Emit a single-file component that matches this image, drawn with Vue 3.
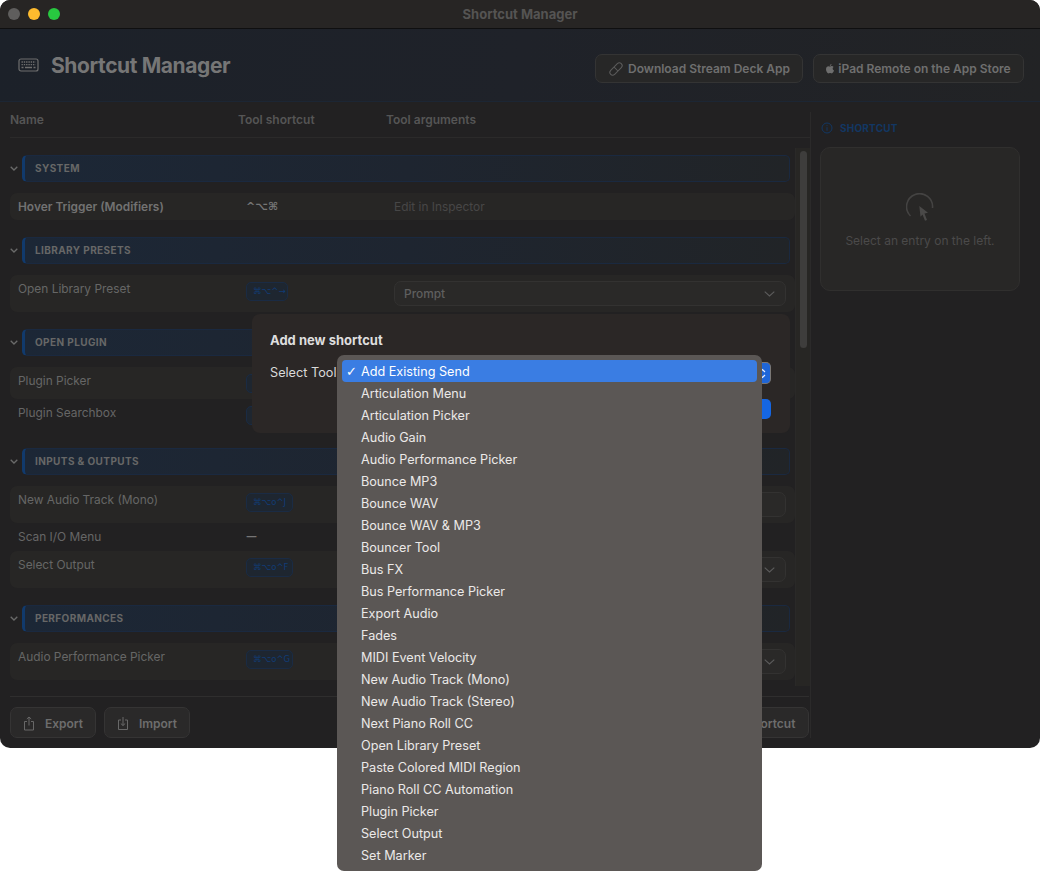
<template>
  <div class="page">
    <div class="window">
      <div class="titlebar">
        <div class="lights">
          <span class="light grey"></span>
          <span class="light yellow"></span>
          <span class="light green"></span>
        </div>
        <span class="window-title">Shortcut Manager</span>
      </div>

      <header class="head">
        <svg class="kbd-icon" width="21" height="14" viewBox="0 0 21 14" fill="none" stroke="#6e6e6e">
          <rect x="1" y="1" width="19" height="12" rx="2" stroke-width="1.2" />
          <path d="M3.5 4h14M3.5 6.6h14" stroke-width="1.3" stroke-dasharray="1.4 .9" />
          <path d="M3.5 9.5h2M7 9.5h7M15.5 9.500h2" stroke-width="1.3" />
        </svg>
        <h1>Shortcut Manager</h1>
        <div class="head-actions">
          <button class="head-btn dl">
            <svg width="16" height="16" viewBox="0 0 16 16" fill="none" stroke="#5c5c5c" stroke-width="1">
              <g transform="rotate(-45 8 8)">
                <rect x="0.500" y="5.200" width="15" height="5.600" rx="2.800" />
                <path d="M8 5.200v5.600" />
              </g>
            </svg>
            Download Stream Deck App
          </button>
          <button class="head-btn ipad">
            <svg width="8" height="10" viewBox="0 0 8 10" fill="#6e6e6e">
              <path d="M5.500 0c.1.8-.6 1.900-1.700 1.900C3.700 1 4.500.1 5.500 0ZM4 2.500c.5 0 1-.4 1.800-.4.700 0 1.400.4 1.800 1-1.400.9-1.200 2.800.4 3.500-.4 1-1.200 2.900-2.200 2.900-.7 0-.9-.4-1.700-.4s-1 .4-1.700.4C1.300 9.500 0 7.300 0 5.300c0-2 1.200-3.100 2.400-3.100.7 0 1.200.3 1.600.3Z" />
            </svg>
            iPad Remote on the App Store
          </button>
        </div>
      </header>

      <div class="body">
        <div class="left">
          <div class="colhead">
            <span>Name</span>
            <span>Tool shortcut</span>
            <span>Tool arguments</span>
          </div>

          <div class="list-wrap">
            <div class="list">
              <section v-for="g in groups" :key="g.name" class="group">
                <div class="group-head">
                  <svg class="chev" width="8" height="5" viewBox="0 0 8 5" fill="none" stroke="#6a6a6a" stroke-width="1.3">
                    <path d="M.7.7 4 4l3.300-3.300" />
                  </svg>
                  <div class="section">{{ g.name }}</div>
                </div>
                <div
                  v-for="r in g.rows"
                  :key="r.name"
                  class="row"
                  :class="{ shaded: r.shaded, tall: r.tall }"
                >
                  <span class="label" :class="{ strong: r.strong }">{{ r.name }}</span>
                  <div class="short-cell">
                    <span v-if="r.badge !== undefined" class="badge" :class="{ narrow: r.narrow }">{{ r.badge }}</span>
                    <span v-else class="plain-key">{{ r.keys }}</span>
                  </div>
                  <div class="arg-cell">
                    <span v-if="r.hint" class="hint">{{ r.hint }}</span>
                    <div v-if="r.field !== undefined" class="field">
                      <span>{{ r.field }}</span>
                      <svg v-if="r.chevron" width="11" height="6" viewBox="0 0 11 6" fill="none" stroke="#5c5c5c" stroke-width="1.100">
                        <path d="M.7.700 5.500 5 10.300.700" />
                      </svg>
                    </div>
                  </div>
                </div>
              </section>
            </div>
            <div class="track"><div class="thumb"></div></div>
          </div>

          <footer class="foot">
            <button class="foot-btn">
              <svg width="12" height="15" viewBox="0 0 12 15" fill="none" stroke="#686868" stroke-width="1">
                <path d="M4 5.500H1.500v8.500h9V5.500H8M6 9.500V1M3.800 3 6 1l2.200 2" />
              </svg>
              Export
            </button>
            <button class="foot-btn">
              <svg width="12" height="15" viewBox="0 0 12 15" fill="none" stroke="#686868" stroke-width="1">
                <path d="M4 4H1.500v9.500h9V4H8M6 1v8.500M3.800 7.500 6 9.500l2.200-2" />
              </svg>
              Import
            </button>
            <button class="foot-btn add">Add new shortcut</button>
          </footer>
        </div>

        <aside class="right">
          <div class="right-label">
            <svg width="12" height="12" viewBox="0 0 12 12" fill="none" stroke="#123763" stroke-width="1">
              <circle cx="6" cy="6" r="5" />
              <path d="M6 5.200v3.600M6 3.200v1" />
            </svg>
            <span>SHORTCUT</span>
          </div>
          <div class="empty-card">
            <svg width="28" height="29" viewBox="0 0 28 29" fill="none">
              <path d="M4.500 23A13 13 0 1 1 26.500 15" stroke="#444342" stroke-width="1.600" />
              <path d="M13.300 13 22 19.700l-3.500.8 2.500 6.500-2 .8-2.500-6.300-2 2.200Z" fill="#4a4948" />
            </svg>
            <p>Select an entry on the left.</p>
          </div>
        </aside>
      </div>
    </div>

    <div class="modal">
      <h2>Add new shortcut</h2>
      <div class="modal-row">
        <span>Select Tool</span>
        <div class="select-stub">
          <svg width="7" height="11" viewBox="0 0 7 11" fill="none" stroke="#e8eefc" stroke-width="1.200">
            <path d="M1 4 3.500 1.500 6 4M1 7l2.500 2.500L6 7" />
          </svg>
        </div>
      </div>
      <div class="modal-actions"><span class="confirm"></span></div>
    </div>

    <div class="menu">
      <div
        v-for="(item, i) in tools"
        :key="item"
        class="menu-item"
        :class="{ active: i === 0 }"
      >
        <span class="tick">{{ i === 0 ? '✓' : '' }}</span>{{ item }}
      </div>
    </div>
  </div>
</template>

<script setup>
const groups = [
  {
    name: 'SYSTEM',
    rows: [
      { name: 'Hover Trigger (Modifiers)', strong: true, shaded: true, keys: '^⌥⌘', hint: 'Edit in Inspector' }
    ]
  },
  {
    name: 'LIBRARY PRESETS',
    rows: [
      { name: 'Open Library Preset', shaded: true, badge: '⌘⌥^→', narrow: true, field: 'Prompt', chevron: true }
    ]
  },
  {
    name: 'OPEN PLUGIN',
    rows: [
      // badges of these two are covered by the modal, only the edge shows
      { name: 'Plugin Picker', shaded: true, badge: '' },
      { name: 'Plugin Searchbox', badge: '' }
    ]
  },
  {
    name: 'INPUTS & OUTPUTS',
    rows: [
      { name: 'New Audio Track (Mono)', shaded: true, badge: '⌘⌥o^J', field: '' },
      { name: 'Scan I/O Menu', tall: true, keys: '—' },
      { name: 'Select Output', shaded: true, badge: '⌘⌥o^F', field: '', chevron: true }
    ]
  },
  {
    name: 'PERFORMANCES',
    rows: [
      { name: 'Audio Performance Picker', shaded: true, badge: '⌘⌥o^G', field: '', chevron: true }
    ]
  }
]

const tools = [
  'Add Existing Send',
  'Articulation Menu',
  'Articulation Picker',
  'Audio Gain',
  'Audio Performance Picker',
  'Bounce MP3',
  'Bounce WAV',
  'Bounce WAV & MP3',
  'Bouncer Tool',
  'Bus FX',
  'Bus Performance Picker',
  'Export Audio',
  'Fades',
  'MIDI Event Velocity',
  'New Audio Track (Mono)',
  'New Audio Track (Stereo)',
  'Next Piano Roll CC',
  'Open Library Preset',
  'Paste Colored MIDI Region',
  'Piano Roll CC Automation',
  'Plugin Picker',
  'Select Output',
  'Set Marker'
]
</script>

<style>
html,
body {
  margin: 0;
  background: #fff;
}
</style>

<style scoped>
.page {
  position: relative;
  width: 1040px;
  height: 871px;
  overflow: hidden;
  background: #fff;
  font-family: Inter, "Noto Sans", "DejaVu Sans", sans-serif;
  font-size: 12px;
}

.window {
  display: flex;
  flex-direction: column;
  height: 748px;
  border-radius: 10px;
  overflow: hidden;
  background: #222122;
}

.titlebar {
  position: relative;
  display: flex;
  align-items: center;
  justify-content: center;
  flex: none;
  height: 28px;
  background: #272524;
  border-bottom: 1px solid #0f0f10;
}
.lights {
  position: absolute;
  left: 8px;
  top: 8px;
  display: flex;
  gap: 8px;
}
.light {
  width: 12px;
  height: 12px;
  border-radius: 50%;
}
.grey { background: #5f5e5d; }
.yellow { background: #febb2e; }
.green { background: #28c840; }
.window-title {
  color: #555453;
  font-size: 13px;
  font-weight: 700;
}

.head {
  display: flex;
  align-items: center;
  flex: none;
  height: 73px;
  box-sizing: border-box;
  padding: 0 16px 0 18px;
  background: linear-gradient(100deg, #1c2129 0%, #1f2229 50%, #222325 100%);
  border-bottom: 1px solid #1c2634;
}
.kbd-icon {
  margin-right: 12px;
}
h1 {
  margin: 0;
  color: #767676;
  font-size: 21px;
  font-weight: 700;
  letter-spacing: -0.4px;
}
.head-actions {
  display: flex;
  gap: 10px;
  margin-left: auto;
  margin-top: 7px;
}
.head-btn {
  display: flex;
  align-items: center;
  justify-content: center;
  gap: 4px;
  height: 29px;
  box-sizing: border-box;
  padding: 0;
  background: #272727;
  border: 1px solid #343434;
  border-radius: 7px;
  color: #6f6f6f;
  font: 600 12px Inter, sans-serif;
}
.dl { width: 208px; }
.ipad { width: 211px; }

.body {
  display: flex;
  flex: 1;
  min-height: 0;
}
.left {
  display: flex;
  flex-direction: column;
  width: 810px;
  flex: none;
  border-right: 1px solid #2b2a2a;
  margin-top: 10px;
  margin-bottom: 10px;
}

.colhead {
  display: grid;
  grid-template-columns: 228px 148px 1fr;
  align-items: start;
  flex: none;
  height: 24px;
  margin-left: 10px;
  padding-top: 1px;
  line-height: 14px;
  border-bottom: 1px solid #2b2a2a;
  color: #555;
  font-weight: 600;
}

.list-wrap {
  display: flex;
  flex: 1;
  min-height: 0;
}
.list {
  flex: 1;
  padding: 17px 0 0 10px;
  overflow: hidden;
}
.group {
  margin-bottom: 17px;
}
.group-head {
  display: flex;
  align-items: center;
  gap: 4px;
  margin-bottom: 11px;
  padding-right: 5px;
}
.chev {
  flex: none;
}
.section {
  flex: 1;
  height: 27px;
  box-sizing: border-box;
  padding-left: 10px;
  line-height: 25px;
  background: linear-gradient(90deg, #1c2736 0%, #1e2530 50%, #212427 100%);
  border: 1px solid #1a2940;
  border-left: 3px solid #113a6c;
  border-radius: 5px;
  color: #676767;
  font-size: 10px;
  font-weight: 700;
  letter-spacing: 0.4px;
}

.row {
  display: grid;
  grid-template-columns: 228px 148px 1fr;
  align-items: start;
  padding: 6px 9px 6px 8px;
  border-radius: 7px;
  font-size: 11.900px;
  line-height: 15px;
  color: #666;
}
.row.shaded {
  background: #272625;
}
.row.tall {
  padding-bottom: 7px;
}
.label.strong {
  color: #727272;
  font-weight: 600;
}
.plain-key {
  display: block;
  height: 15px;
  line-height: 15px;
  color: #757575;
  font-family: "DejaVu Sans", sans-serif;
  font-size: 11px;
  font-weight: 700;
}
.badge {
  display: block;
  width: 47px;
  height: 19px;
  box-sizing: border-box;
  margin-top: 1px;
  padding: 0 0 0 6px;
  line-height: 17px;
  background: #1e2630;
  border: 1px solid #1a2b44;
  border-radius: 5px;
  color: #113c76;
  font-family: "DejaVu Sans", sans-serif;
  font-size: 8.500px;
  white-space: nowrap;
}
.badge.narrow {
  width: 42px;
}
.hint {
  color: #474747;
}
.field {
  display: flex;
  align-items: center;
  justify-content: space-between;
  height: 25px;
  box-sizing: border-box;
  padding: 0 10px 0 9px;
  background: #2a2928;
  border: 1px solid #333231;
  border-radius: 7px;
  color: #5f5f5f;
  font-weight: 500;
}

.track {
  flex: none;
  width: 15px;
  margin-top: 10px;
  background: #272624;
  border-left: 1px solid #2a2928;
  box-sizing: border-box;
  padding: 3px 3px 0 4px;
}
.thumb {
  height: 197px;
  background: #3e3d3c;
  border-radius: 4px;
}

.foot {
  display: flex;
  flex: none;
  gap: 8px;
  margin: 10px 1px 0 10px;
  padding-top: 10px;
  border-top: 1px solid #2f2e2e;
}
.foot-btn {
  display: flex;
  align-items: center;
  justify-content: center;
  gap: 10px;
  width: 86px;
  height: 31px;
  padding: 1px 0 0;
  background: #2a2929;
  border: 1px solid #353434;
  border-radius: 7px;
  color: #6d6d6d;
  font: 600 12px Inter, sans-serif;
}
.foot-btn.add {
  width: 130px;
  margin-left: auto;
}

.right {
  flex: 1;
  padding: 19px 20px 0 9px;
}
.right-label {
  display: flex;
  align-items: center;
  gap: 7px;
  height: 14px;
  margin-bottom: 12px;
  padding-left: 1px;
  color: #123763;
  font-size: 10px;
  font-weight: 700;
  letter-spacing: 0.2px;
}
.empty-card {
  display: flex;
  flex-direction: column;
  align-items: center;
  height: 144px;
  box-sizing: border-box;
  padding-top: 45px;
  background: #282726;
  border: 1px solid #302f2e;
  border-radius: 10px;
}
.empty-card p {
  margin: 11px 0 0;
  color: #4b4a4a;
  font-size: 12px;
  line-height: 15px;
}

.modal {
  position: absolute;
  left: 252px;
  top: 314px;
  width: 538px;
  height: 119px;
  box-sizing: border-box;
  padding: 19px 19px 0 18px;
  background: #2b2726;
  border-radius: 8px;
  color: #d9d9d9;
}
.modal h2 {
  margin: 0 0 14px;
  color: #dedede;
  font-size: 13px;
  line-height: 15px;
  font-weight: 700;
}
.modal-row {
  display: flex;
  align-items: center;
  justify-content: space-between;
  font-size: 12.700px;
  line-height: 22px;
}
.select-stub {
  display: flex;
  align-items: center;
  justify-content: center;
  width: 16px;
  height: 22px;
  background: #1f66d8;
  border: 1px solid #7a7775;
  border-left: 0;
  border-radius: 0 5px 5px 0;
  box-sizing: border-box;
}
.modal-actions {
  display: flex;
  justify-content: flex-end;
  margin-top: 15px;
}
.confirm {
  width: 30px;
  height: 20px;
  background: #1566e2;
  border-radius: 5px;
}

.menu {
  position: absolute;
  left: 337px;
  top: 355px;
  width: 425px;
  height: 516px;
  box-sizing: border-box;
  padding: 5px;
  overflow: hidden;
  background: #5b5755;
  border-radius: 7px;
}
.menu-item {
  display: flex;
  align-items: center;
  height: 22px;
  color: #ebe9e8;
  font-size: 12.650px;
}
.menu-item.active {
  background: #3a7de3;
  border-radius: 4px;
  color: #fff;
}
.tick {
  flex: none;
  width: 19px;
  padding-left: 4px;
  box-sizing: border-box;
  font-family: "DejaVu Sans", sans-serif;
  font-size: 13px;
  font-weight: 700;
}
</style>
